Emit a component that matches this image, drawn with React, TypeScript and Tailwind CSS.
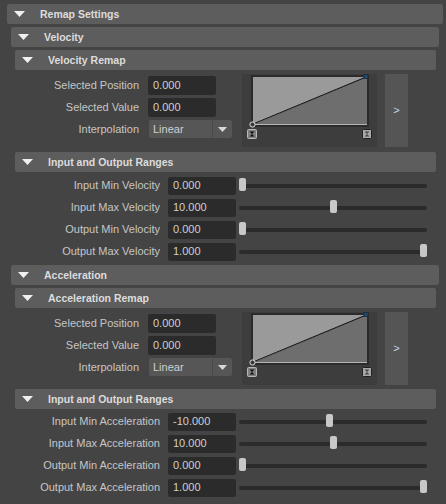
import React from "react";

const font = { fontFamily: '"Liberation Sans", Arial, sans-serif' };

const Triangle = () => (
	<svg width="11" height="7" viewBox="0 0 11 7" className="shrink-0">
		<polygon points="0,0 11,0 5.5,6" fill="#f0f0f0" />
	</svg>
);

const Header = ({ title, className }: { title: string; className: string }) => (
	<div
		className={`h-[20px] rounded-[2px] bg-[#5d5d5d] flex items-center pl-[7px] ${className}`}
	>
		<Triangle />
		<span className="ml-[15px] text-[10.5px] font-bold text-[#dcdcdc] leading-none">
			{title}
		</span>
	</div>
);

const Field = ({ value, className = "" }: { value: string; className?: string }) => (
	<div
		className={`bg-[#2b2b2b] rounded-[2px] flex items-center pl-[5px] text-[11px] text-[#cfcfcf] ${className}`}
	>
		{value}
	</div>
);

const Graph = () => (
	<div className="w-[135px] h-[73px] bg-[#3d3d3d]">
		<svg width="135" height="73" viewBox="0 0 135 73">
			<rect x="9" y="1" width="118" height="52" fill="#2b2b2b" />
			<polygon points="11,3 125,3 11,51" fill="#9a9a9a" />
			<polygon points="125,3 125,51 11,51" fill="#6e6e6e" />
			<line x1="11" y1="50.5" x2="125" y2="50.5" stroke="#b4b4b4" strokeWidth="1" />
			<line x1="11" y1="50" x2="124" y2="3" stroke="#111" strokeWidth="1" />
			<rect x="122" y="0.5" width="4" height="4" fill="#24496e" stroke="#1a2b3c" strokeWidth="0.8" />
			<circle cx="10.5" cy="50.5" r="2.6" fill="#3a3a3a" stroke="#e0e0e0" strokeWidth="1" />
			<rect x="5.5" y="55.5" width="9" height="9" rx="1" fill="#808080" stroke="#b8b8b8" strokeWidth="1" />
			<polygon points="7.5,57.5 12.5,57.5 10,60 12.5,62.5 7.5,62.5 10,60" fill="#101010" />
			<rect x="120.5" y="55.5" width="9" height="9" rx="1" fill="#a8a8a8" stroke="#202020" strokeWidth="1" />
			<polygon points="122.5,57.5 127.5,57.5 125,60 127.5,62.5 122.5,62.5 125,60" fill="#4a4a4a" />
		</svg>
	</div>
);

const RemapBody = () => (
	<div className="flex h-[73px]">
		<div className="w-[217px] pt-[2px] flex flex-col gap-[3px]">
			{[
				["Selected Position", "0.000"],
				["Selected Value", "0.000"],
			].map(([label, value]) => (
				<div key={label} className="flex items-center h-[19px]">
					<span className="w-[124px] text-right text-[11px] text-[#c6c6c6]">{label}</span>
					<Field value={value} className="ml-[9px] w-[68px] h-[19px]" />
				</div>
			))}
			<div className="flex items-center h-[18px]">
				<span className="w-[124px] text-right text-[11px] text-[#c6c6c6]">Interpolation</span>
				<div className="ml-[10px] w-[83px] h-[18px] flex rounded-[2px] bg-[#565656]">
					<span className="flex-1 flex items-center pl-[4px] text-[11px] text-[#d0d0d0]">
						Linear
					</span>
					<span className="w-[20px] border-l border-[#4a4a4a] flex items-center justify-center">
						<svg width="9" height="5" viewBox="0 0 9 5">
							<polygon points="0,0 9,0 4.5,5" fill="#d8d8d8" />
						</svg>
					</span>
				</div>
			</div>
		</div>
		<div className="ml-[10px]">
			<Graph />
		</div>
		<div className="ml-[8px] w-[23px] h-[73px] bg-[#555] flex items-center justify-center text-[11px] text-[#c9d6e6]">
			&gt;
		</div>
	</div>
);

type Range = { label: string; value: string; frac: number };

const RangeRows = ({ rows }: { rows: Range[] }) => (
	<div className="flex flex-col gap-[5px]">
		{rows.map((r) => (
			<div key={r.label} className="flex items-center h-[17px]">
				<span className="w-[145px] text-right text-[11px] text-[#c6c6c6]">{r.label}</span>
				<Field value={r.value} className="ml-[8px] w-[68px] h-[18px]" />
				<div className="ml-[3px] w-[188px] h-[17px] relative flex items-center">
					<div className="w-full h-[4px] rounded-full bg-[#2b2b2b]" />
					<div
						className="absolute top-[1px] w-[7px] h-[13px] rounded-[2px] bg-[#c8c8c8]"
						style={{ left: `${Math.round(r.frac * 181)}px` }}
					/>
				</div>
			</div>
		))}
	</div>
);

const velocityRanges: Range[] = [
	{ label: "Input Min Velocity", value: "0.000", frac: 0 },
	{ label: "Input Max Velocity", value: "10.000", frac: 0.503 },
	{ label: "Output Min Velocity", value: "0.000", frac: 0 },
	{ label: "Output Max Velocity", value: "1.000", frac: 1 },
];

const accelRanges: Range[] = [
	{ label: "Input Min Acceleration", value: "-10.000", frac: 0.48 },
	{ label: "Input Max Acceleration", value: "10.000", frac: 0.503 },
	{ label: "Output Min Acceleration", value: "0.000", frac: 0 },
	{ label: "Output Max Acceleration", value: "1.000", frac: 1 },
];

export default function App() {
	return (
		<div className="w-[446px] h-[504px] bg-[#444444] overflow-hidden pt-[4px]" style={font}>
			<div className="ml-[7px] w-[436px]">
				<Header title="Remap Settings" className="" />
				<div className="ml-[4px] w-[428px] mt-[3px]">
					<Header title="Velocity" className="" />
					<div className="ml-[4px] w-[421px] mt-[3px]">
						<Header title="Velocity Remap" className="" />
						<div className="mt-[4px]">
							<RemapBody />
						</div>
						<Header title="Input and Output Ranges" className="mt-[5px]" />
						<div className="mt-[5px]">
							<RangeRows rows={velocityRanges} />
						</div>
					</div>
					<Header title="Acceleration" className="mt-[5px]" />
					<div className="ml-[4px] w-[421px] mt-[3px]">
						<Header title="Acceleration Remap" className="" />
						<div className="mt-[4px]">
							<RemapBody />
						</div>
						<Header title="Input and Output Ranges" className="mt-[4px]" />
						<div className="mt-[4px]">
							<RangeRows rows={accelRanges} />
						</div>
					</div>
				</div>
			</div>
		</div>
	);
}
